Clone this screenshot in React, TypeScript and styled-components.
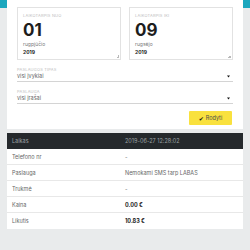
import React from "react";
import styled, { createGlobalStyle } from "styled-components";

const GlobalStyle = createGlobalStyle`
  html, body {
    margin: 0;
    padding: 0;
  }
  body {
    font-family: Inter, "Noto Sans", sans-serif;
    background: linear-gradient(to bottom, #1ca7be 0, #1ca7be 8px, #e9ebec 8px);
    min-height: 250px;
  }
`;

const Page = styled.div`
  padding: 0 7px;
`;

const FormCard = styled.div`
  background: #fff;
  padding: 7px 10px 4px;
`;

const DateRow = styled.div`
  display: grid;
  grid-template-columns: 1fr 1fr;
  gap: 8px;
`;

const DateBox = styled.div`
  position: relative;
  box-sizing: border-box;
  height: 53px;
  border: 1px solid #e2e2e2;
  padding: 5px 5px;
`;

const Grip = styled.span`
  position: absolute;
  right: 1px;
  bottom: 1px;
  width: 3px;
  height: 3px;
  background: linear-gradient(135deg, transparent 50%, #b9b9b9 50%);
`;

const TinyLabel = styled.div`
  font-size: 4px;
  line-height: 5px;
  color: #bdbdbd;
  text-transform: uppercase;
  letter-spacing: 0.2px;
`;

const Day = styled.div`
  margin-top: 4px;
  font-size: 17px;
  line-height: 17px;
  font-weight: 700;
  color: #1d1d1d;
`;

const Month = styled.div`
  margin-top: 2px;
  font-size: 5px;
  line-height: 6px;
  color: #7a7a7a;
`;

const Year = styled.div`
  margin-top: 2px;
  font-size: 5px;
  line-height: 6px;
  font-weight: 700;
  color: #222;
`;

const Field = styled.div`
  margin-top: 7px;
`;

const SelectLine = styled.div`
  display: flex;
  align-items: center;
  justify-content: space-between;
  margin-top: 1px;
  padding: 0 3px 1px 0;
  border-bottom: 1px solid #d4d4d4;
  font-size: 5.5px;
  line-height: 7px;
  color: #666;
`;

const Actions = styled.div`
  display: flex;
  justify-content: flex-end;
  margin-top: 7px;
  margin-right: 1px;
`;

const ShowButton = styled.button`
  display: flex;
  align-items: center;
  justify-content: center;
  gap: 2px;
  width: 43px;
  height: 14px;
  padding: 0;
  border: none;
  border-radius: 1px;
  background: #f9e13e;
  color: #4a4a4a;
  font-family: Inter, "Noto Sans", sans-serif;
  font-size: 5.5px;
  cursor: pointer;
`;

const Tick = styled.span`
  font-family: "DejaVu Sans", sans-serif;
  font-size: 6px;
  color: #111;
`;

const Table = styled.div`
  margin-top: 4px;
  background: #fff;
`;

const Row = styled.div<{ $head?: boolean }>`
  display: grid;
  grid-template-columns: 113px 1fr;
  align-items: center;
  box-sizing: border-box;
  height: 16px;
  padding: 0 5px;
  font-size: 5.5px;
  background: ${(p) => (p.$head ? "#25292c" : "#fff")};
  color: ${(p) => (p.$head ? "#9ea3a6" : "#666")};
  border-bottom: ${(p) => (p.$head ? "none" : "1px solid #e8e8e8")};

  &:last-child {
    border-bottom: none;
  }
`;

const Value = styled.span<{ $bold?: boolean }>`
  font-weight: ${(p) => (p.$bold ? 700 : 400)};
  color: ${(p) => (p.$bold ? "#222" : "#666")};
`;

const Arrow = () => (
  <svg width="3" height="3" viewBox="0 0 3 3">
    <path d="M0 0.5 L3 0.5 L1.5 2.5 Z" fill="#111" />
  </svg>
);

const rows = [
  { label: "Telefono nr", value: "-" },
  { label: "Paslauga", value: "Nemokami SMS tarp LABAS" },
  { label: "Trukmė", value: "-" },
  { label: "Kaina", value: "0.00 €", bold: true },
  { label: "Likutis", value: "10.83 €", bold: true },
];

const App: React.FC = () => {
  return (
    <>
      <GlobalStyle />
      <Page>
        <FormCard>
          <DateRow>
            <DateBox>
              <TinyLabel>Laikotarpis nuo</TinyLabel>
              <Day>01</Day>
              <Month>rugpjūčio</Month>
              <Year>2019</Year>
              <Grip />
            </DateBox>
            <DateBox>
              <TinyLabel>Laikotarpis iki</TinyLabel>
              <Day>09</Day>
              <Month>rugsėjo</Month>
              <Year>2019</Year>
              <Grip />
            </DateBox>
          </DateRow>
          <Field>
            <TinyLabel>Paslaugos tipas</TinyLabel>
            <SelectLine>
              <span>visi įvykiai</span>
              <Arrow />
            </SelectLine>
          </Field>
          <Field>
            <TinyLabel>Paslauga</TinyLabel>
            <SelectLine>
              <span>visi įrašai</span>
              <Arrow />
            </SelectLine>
          </Field>
          <Actions>
            <ShowButton>
              <Tick>✔</Tick>
              Rodyti
            </ShowButton>
          </Actions>
        </FormCard>
        <Table>
          <Row $head>
            <span>Laikas</span>
            <span>2019-06-27 12:28:02</span>
          </Row>
          {rows.map((r) => (
            <Row key={r.label}>
              <span>{r.label}</span>
              <Value $bold={r.bold}>{r.value}</Value>
            </Row>
          ))}
        </Table>
      </Page>
    </>
  );
};

export default App;
